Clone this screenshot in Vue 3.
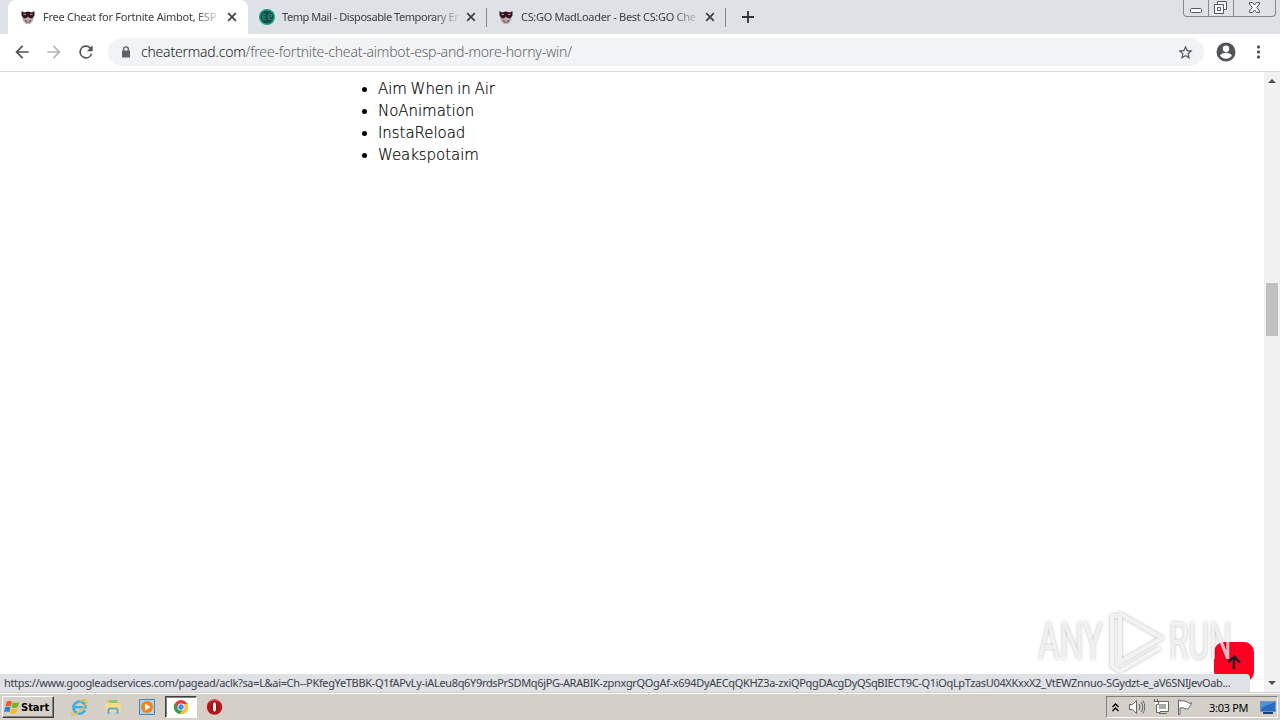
<template>
  <div class="desktop">
    <div class="tab-strip">
      <div class="tab-list">
        <div
          v-for="(tab, index) in tabs"
          :key="tab.title"
          class="tab"
          :class="[tab.icon, { active: index === 0 }]"
        >
          <svg v-if="tab.icon === 'mad'" class="favicon" viewBox="0 0 16 16">
            <path d="M2 3 4 4l4-1 4 1 2-1v5l-1 4-3 3H6l-3-3-1-4z" fill="#c3adb1" />
            <path d="M1.500 2 4 3.500 8 2.500l4 1L14.500 2v4.500L12 9.500 9.500 9 8 7.500 6.500 9 4 9.500 1.500 6.500z" fill="#35151e" />
            <path d="M4.500 11h7L10 13.500H6z" fill="#71545b" />
            <path d="M6 11.500h4l-1 1H7z" fill="#efe6e6" />
            <path d="M3.500 5.500h2.500M10 5.500h2.500" stroke="#d98a9a" />
          </svg>
          <svg v-else class="favicon" viewBox="0 0 16 16">
            <circle cx="8" cy="8" r="8" fill="#14a085" />
            <circle cx="8" cy="8" r="6.500" fill="#174f4d" />
            <path d="M7 5.500H4v5h3M4 8h3M9.500 5.500h3V8h-3zM12.500 10.500h-3V8" fill="none" stroke="#2b8379" />
          </svg>
          <span class="tab-title">{{ tab.title }}</span>
          <svg class="tab-close" viewBox="0 0 10 10">
            <path d="m1.200 1.200 7.600 7.600M8.800 1.200 1.200 8.800" />
          </svg>
        </div>
      </div>
      <svg class="new-tab" viewBox="0 0 12 12">
        <path d="M6 0v12M0 6h12" />
      </svg>
      <div class="window-controls">
        <div class="control">
          <svg width="12" height="6"><rect x=".5" y=".5" width="11" height="4" rx="1" /></svg>
        </div>
        <div class="control">
          <svg width="14" height="14">
            <path d="M3.500 3.500v-3h9v8h-3M.5 3.500h9v9h-9zM3.500 6.500h3v3h-3z" />
          </svg>
        </div>
        <div class="control close">
          <svg width="13" height="12">
            <path d="M1.500.500h3l2 2.500 2-2.500h3v1.500L8.800 5.500l2.700 3.500v1.500h-3l-2-2.500-2 2.500h-3V9l2.700-3.500L1.500 2z" />
          </svg>
        </div>
      </div>
    </div>

    <div class="toolbar">
      <svg class="nav-icon" viewBox="0 0 24 24"><path d="M20 11H7.830l5.590-5.590L12 4l-8 8 8 8 1.410-1.410L7.830 13H20z" /></svg>
      <svg class="nav-icon muted" viewBox="0 0 24 24"><path d="m12 4-1.410 1.410L16.170 11H4v2h12.170l-5.580 5.590L12 20l8-8z" /></svg>
      <svg class="nav-icon" viewBox="0 0 24 24"><path d="M17.650 6.350A8 8 0 1 0 19.730 14h-2.080A6 6 0 1 1 12 6c1.660 0 3.140.69 4.220 1.780L13 11h7V4z" /></svg>
      <div class="address-bar">
        <svg class="lock" viewBox="0 0 10 12">
          <path d="M1 4.500h8v7H1z" />
          <path class="shackle" d="M2.700 5V3a2.300 2.200 0 0 1 4.600 0v2" />
        </svg>
        <div class="url"><span class="host">cheatermad.com</span>/free-fortnite-cheat-aimbot-esp-and-more-horny-win/</div>
        <svg class="star" viewBox="0 0 24 24"><path d="m22 9.240-7.190-.62L12 2 9.190 8.630 2 9.240l5.460 4.730L5.820 21 12 17.270 18.180 21l-1.630-7.030zM12 15.400l-3.760 2.270 1-4.280-3.320-2.880 4.380-.38L12 6.100l1.710 4.040 4.380.38-3.320 2.880 1 4.280z" /></svg>
      </div>
      <svg class="profile" viewBox="0 0 20 20">
        <path d="M10 .5a9.500 9.500 0 1 0 0 19 9.500 9.500 0 0 0 0-19zm0 3a3.200 3.200 0 1 1 0 6.400 3.200 3.200 0 0 1 0-6.400zm0 13.300a7 7 0 0 1-5.800-3c0-1.900 3.900-3 5.800-3s5.800 1.100 5.800 3a7 7 0 0 1-5.800 3z" />
      </svg>
      <svg class="more" viewBox="0 0 4 14">
        <rect y=".5" width="3" height="3" rx="1" x="0" />
        <rect y="5.500" width="3" height="3" rx="1" x="0" />
        <rect y="10.500" width="3" height="3" rx="1" x="0" />
      </svg>
    </div>

    <div class="viewport">
      <main class="page">
        <ul class="features">
          <li v-for="item in features" :key="item">{{ item }}</li>
        </ul>
      </main>
      <div class="scrollbar">
        <svg class="scroll-arrow" viewBox="0 0 8 4"><path d="m0 4 4-4 4 4z" /></svg>
        <div class="thumb"></div>
        <svg class="scroll-arrow" viewBox="0 0 8 4"><path d="m0 0 4 4 4-4z" /></svg>
      </div>
      <div class="to-top">
        <svg viewBox="0 0 14 14"><path d="M7 14V1.500M1 7.500l6-6 6 6" /></svg>
      </div>
      <svg class="watermark" viewBox="0 0 200 66">
        <g class="mark">
          <text x="2" y="50" textLength="65" lengthAdjust="spacingAndGlyphs">ANY</text>
          <path d="M82 7h-6v50l8 5 40-23M84 5v48l42-24zM84 5l42 24" />
          <text x="133" y="50" textLength="63" lengthAdjust="spacingAndGlyphs">RUN</text>
        </g>
      </svg>
      <div class="status">{{ status }}</div>
    </div>

    <footer class="taskbar">
      <div class="start">
        <svg viewBox="0 0 18 16">
          <path d="M3 2q3-2 6 0L7.500 7.500q-3-2-6 0z" fill="#e8622c" />
          <path d="M10 2.500q3 2 7 0L15.500 8q-4 2-7 0z" fill="#72b52b" />
          <path d="M1.300 8.500q3-2 6 0L6 14q-3-2-6 0z" fill="#3180ce" />
          <path d="M8.300 9q3 2 7 0L14 14.500q-4 2-7 0z" fill="#f5bd22" />
        </svg>
        <span>Start</span>
      </div>
      <div class="quick-launch">
        <div class="app">
          <svg viewBox="0 0 18 18">
            <path d="M15 12a6 6 0 1 1 .5-2.800H5" fill="none" stroke="#3daee9" stroke-width="2.600" />
            <path d="M2.500 14C0 19 5 17 10 13s8-10 6-11-4 .5-6 2" fill="none" stroke="#e9bd36" stroke-width="1.300" />
          </svg>
        </div>
        <div class="app">
          <svg viewBox="0 0 18 18">
            <path d="M2 2.500h5l1 1h7V10H2z" fill="#e9c45b" />
            <path d="M5 2h8v4H5z" fill="#8cc47c" />
            <path d="M1.500 5h15v9h-15z" fill="#f6dc82" />
            <path d="M4.500 16v-4q0-1.500 1.500-1.500h6q1.500 0 1.500 1.500v4" fill="none" stroke="#62a9d8" stroke-width="2" />
          </svg>
        </div>
        <div class="app">
          <svg viewBox="0 0 18 18">
            <path d="M1.500 1.500h15v15h-15z" fill="#a9d2ee" stroke="#4783b6" />
            <circle cx="9" cy="9" r="6" fill="#ef8518" />
            <path d="m7 5.500 5.500 3.500L7 12.500z" fill="#fff" />
          </svg>
        </div>
        <div class="app running">
          <svg viewBox="0 0 18 18">
            <circle cx="9" cy="9" r="7" fill="#e34133" />
            <path d="M3 5.300A7 7 0 0 0 8 16l3.500-5.500L6 10z" fill="#31a350" />
            <path d="M15.500 6A7 7 0 0 1 8 16l4-6-2-4z" fill="#fcc934" />
            <circle cx="9" cy="9" r="3.500" fill="#fff" />
            <circle cx="9" cy="9" r="2.700" fill="#4285f4" />
          </svg>
        </div>
        <div class="app">
          <svg viewBox="0 0 18 18">
            <circle cx="8.500" cy="9" r="7.700" fill="#b9141c" />
            <path d="M3.500 4a7 7 0 0 1 10 0" fill="none" stroke="#e4686a" />
            <ellipse cx="8.500" cy="9" rx="2.200" ry="5.200" fill="#f7eeee" stroke="#6e0509" />
          </svg>
        </div>
      </div>
      <div class="tray">
        <svg class="chevrons" viewBox="0 0 7 9"><path d="m.5 4 3-3 3 3m-6 4 3-3 3 3" /></svg>
        <svg class="tray-icon" viewBox="0 0 16 16">
          <path d="M.5 5.500h3l4-4v13l-4-4h-3z" fill="#fff" />
          <path d="M10 5q2 3 0 6M12 3q3.500 5 0 10M14 1.500q3.500 6.500 0 13" fill="none" />
        </svg>
        <svg class="tray-icon" viewBox="0 0 16 16">
          <path d="M3.500 2.500h12v10h-12zM6 14.500h8" fill="#fff" />
          <path d="M6 5h7v5H6z" fill="#aaa" stroke="none" />
          <path d="M1.500 0v3M4.500 0v3M.5 2.500h5v3h-2v8h4" fill="#fff" />
        </svg>
        <svg class="tray-icon" viewBox="0 0 16 16">
          <path d="M1.500 1v14.500h1.500V9q3-1 6 1h2l4-6q-3 1-5-1t-7-1V1z" fill="#fff" />
        </svg>
        <span class="clock">3:03 PM</span>
        <svg class="show-desktop" viewBox="0 0 16 14">
          <path d="M.5 1.500h15v10H.5z" fill="#286bc2" stroke="#7793b8" />
          <path d="M1 2h14L1 8z" fill="#4e91df" />
          <path d="M3 13h10" stroke="#174276" stroke-width="2" />
        </svg>
      </div>
    </footer>
  </div>
</template>

<script setup>
const tabs = [
  { title: 'Free Cheat for Fortnite Aimbot, ESP', icon: 'mad' },
  { title: 'Temp Mail - Disposable Temporary Er', icon: 'mail' },
  { title: 'CS:GO MadLoader - Best CS:GO Che', icon: 'mad' },
]

const features = ['Aim When in Air', 'NoAnimation', 'InstaReload', 'Weakspotaim']

const status =
  'https://www.googleadservices.com/pagead/aclk?sa=L&ai=Ch--PKfegYeTBBK-Q1fAPvLy-iALeu8q6Y9rdsPrSDMq6jPG-ARABIK-zpnxgrQOgAf-x694DyAECqQKHZ3a-zxiQPqgDAcgDyQSqBIECT9C-Q1iOqLpTzasU04XKxxX2_VtEWZnnuo-SGydzt-e_aV6SNIJevOab...'
</script>

<style>
body {
  background: #fff;
}
</style>

<style scoped>
.desktop {
  width: 1280px;
  height: 720px;
  display: flex;
  flex-direction: column;
  overflow: hidden;
  font-family: 'Noto Sans', 'DejaVu Sans', sans-serif;
  color: #000;
}

svg {
  display: block;
  flex: none;
}

.tab-strip {
  height: 34px;
  flex: none;
  display: flex;
  background: #dee1e6;
}

.tab-list {
  display: flex;
  padding-left: 8px;
}

.tab {
  box-sizing: border-box;
  width: 239px;
  height: 34px;
  display: flex;
  align-items: center;
  padding: 0 11px;
  font-size: 11px;
  letter-spacing: -0.31px;
  color: #3c4043;
}

.tab.mail {
  letter-spacing: -0.44px;
}

.tab:not(.active) {
  position: relative;
}

.tab:not(.active)::after {
  content: '';
  position: absolute;
  right: 0;
  top: 8px;
  width: 1px;
  height: 19px;
  background: #808388;
}

.tab.active {
  width: 240px;
  padding-left: 12px;
  letter-spacing: -0.25px;
  background: #fff;
  border-radius: 8px 8px 0 0;
  box-shadow: 0 8px 0 #fff;
}

.favicon {
  width: 16px;
  height: 16px;
  margin-right: 7px;
}

.tab-title {
  width: 176px;
  margin-right: 8px;
  padding-bottom: 2px;
  white-space: nowrap;
  mask-image: linear-gradient(to right, #000 152px, transparent 180px);
}

.tab-close {
  width: 10px;
  height: 10px;
  fill: none;
  stroke: #3c4043;
  stroke-width: 1.7;
}

.new-tab {
  width: 12px;
  height: 12px;
  margin: 11px 0 0 16px;
  stroke: #30343a;
  stroke-width: 1.8;
}

.window-controls {
  box-sizing: border-box;
  display: flex;
  width: 93px;
  height: 17px;
  margin-left: auto;
  margin-right: 4px;
  border: 1px solid #858991;
  border-top: 0;
  border-radius: 0 0 4px 4px;
}

.control {
  box-sizing: border-box;
  width: 25px;
  display: flex;
  align-items: center;
  justify-content: center;
  border-right: 1px solid #858991;
}

.control:first-child {
  padding-top: 6px;
}

.control.close {
  width: 41px;
  border: 0;
}

.control svg {
  fill: #f7f7f7;
  stroke: #555b66;
}

.toolbar {
  box-sizing: border-box;
  height: 38px;
  flex: none;
  display: flex;
  align-items: center;
  padding: 0 19px 1px 12px;
  background: #fff;
  border-bottom: 1px solid #d8d9dc;
}

.nav-icon {
  width: 20px;
  height: 20px;
  margin-right: 12px;
  fill: #505357;
}

.nav-icon.muted {
  fill: #b4b6b9;
}

.address-bar {
  box-sizing: border-box;
  width: 1096px;
  height: 28px;
  display: flex;
  align-items: center;
  padding: 0 10px 0 13px;
  border-radius: 14px;
  background: #f1f3f4;
}

.lock {
  width: 10px;
  height: 12px;
  margin-right: 10px;
  fill: #5f6368;
}

.shackle {
  fill: none;
  stroke: #5f6368;
  stroke-width: 1.3;
}

.url {
  flex: 1;
  font-size: 14px;
  font-weight: 300;
  line-height: 18px;
  letter-spacing: -0.21px;
  white-space: nowrap;
  color: #5f6368;
}

.host {
  color: #202124;
}

.star {
  width: 17px;
  height: 17px;
  fill: #505357;
}

.profile {
  width: 20px;
  height: 20px;
  margin-left: 12px;
  fill: #505357;
}

.more {
  width: 4px;
  height: 14px;
  margin-left: auto;
  fill: #505357;
}

.viewport {
  height: 620px;
  flex: none;
  display: flex;
  position: relative;
  background: #fff;
}

.page {
  flex: 1;
}

.features {
  margin: 6px 0 0 338px;
  padding-left: 40px;
  font-family: 'DejaVu Sans', sans-serif;
  font-size: 15px;
  font-weight: 200;
  line-height: 22px;
  letter-spacing: -0.05px;
  word-spacing: -1px;
  -webkit-text-stroke: 0.2px #000;
}

.scrollbar {
  box-sizing: border-box;
  width: 16px;
  display: flex;
  flex-direction: column;
  align-items: center;
  justify-content: space-between;
  padding: 7px 0;
  background: #f1f1f1;
}

.scroll-arrow {
  width: 8px;
  height: 4px;
  fill: #505050;
}

.thumb {
  width: 12px;
  height: 53px;
  margin-bottom: 145px;
  background: #c1c1c1;
}

.to-top {
  position: absolute;
  left: 1214px;
  top: 570px;
  width: 40px;
  height: 40px;
  display: flex;
  align-items: center;
  justify-content: center;
  border-radius: 10px;
  background: #ff0023;
}

.to-top svg {
  width: 14px;
  height: 14px;
  fill: none;
  stroke: #21171a;
  stroke-width: 2.4;
}

.watermark {
  position: absolute;
  left: 1036px;
  top: 537px;
  width: 200px;
  height: 66px;
}

.mark {
  fill: rgba(255, 255, 255, 0.7);
  filter: drop-shadow(0 0 1.5px rgba(0, 0, 0, 0.38));
}

.mark text {
  font-family: Roboto, 'Liberation Sans', sans-serif;
  font-size: 51px;
}

.mark path {
  fill: none;
  stroke: rgba(255, 255, 255, 0.8);
  stroke-width: 4;
  stroke-linejoin: round;
}

.status {
  box-sizing: border-box;
  position: absolute;
  left: 0;
  bottom: 0;
  width: 1250px;
  height: 18px;
  padding-left: 4px;
  border-top-right-radius: 4px;
  background: #dee1e6;
  color: #3c4043;
  font-size: 11px;
  line-height: 18px;
  letter-spacing: -0.335px;
  white-space: nowrap;
}

.taskbar {
  box-sizing: border-box;
  height: 28px;
  display: flex;
  align-items: center;
  padding: 1px 2px 0;
  border-top: 1px solid #d4d0c8;
  box-shadow: inset 0 1px #fff;
  background: #d4d0c8;
}

.start {
  box-sizing: border-box;
  width: 52px;
  height: 22px;
  display: flex;
  align-items: center;
  padding-left: 1px;
  border: 1px solid;
  border-color: #fff #404040 #404040 #fff;
  box-shadow: inset -1px -1px #808080;
  font: bold 11px 'DejaVu Sans Condensed', 'DejaVu Sans', sans-serif;
}

.start svg {
  width: 16px;
  height: 16px;
  margin-right: 1px;
}

.quick-launch {
  display: flex;
  gap: 2px;
  margin-left: 9px;
}

.app {
  box-sizing: border-box;
  width: 32px;
  height: 22px;
  display: flex;
  align-items: center;
  justify-content: center;
}

.app svg {
  width: 18px;
  height: 18px;
}

.app.running {
  border: 1px solid;
  border-color: #404040 #fff #fff #404040;
  box-shadow: inset 1px 1px #808080;
  background: #fff;
}

.tray {
  box-sizing: border-box;
  width: 172px;
  height: 22px;
  display: flex;
  align-items: center;
  margin-left: auto;
  padding-left: 5px;
  border: 1px solid;
  border-color: #808080 #fff #fff #808080;
  font-size: 11px;
}

.chevrons {
  width: 7px;
  height: 9px;
  margin-right: 10px;
  fill: none;
  stroke: #000;
  stroke-width: 1.3;
}

.tray-icon {
  width: 16px;
  height: 16px;
  margin-right: 8px;
  stroke: #666;
}

.clock {
  margin-left: 8px;
  letter-spacing: -0.3px;
  white-space: nowrap;
}

.show-desktop {
  width: 16px;
  height: 14px;
  margin-left: auto;
  margin-right: 1px;
}
</style>
